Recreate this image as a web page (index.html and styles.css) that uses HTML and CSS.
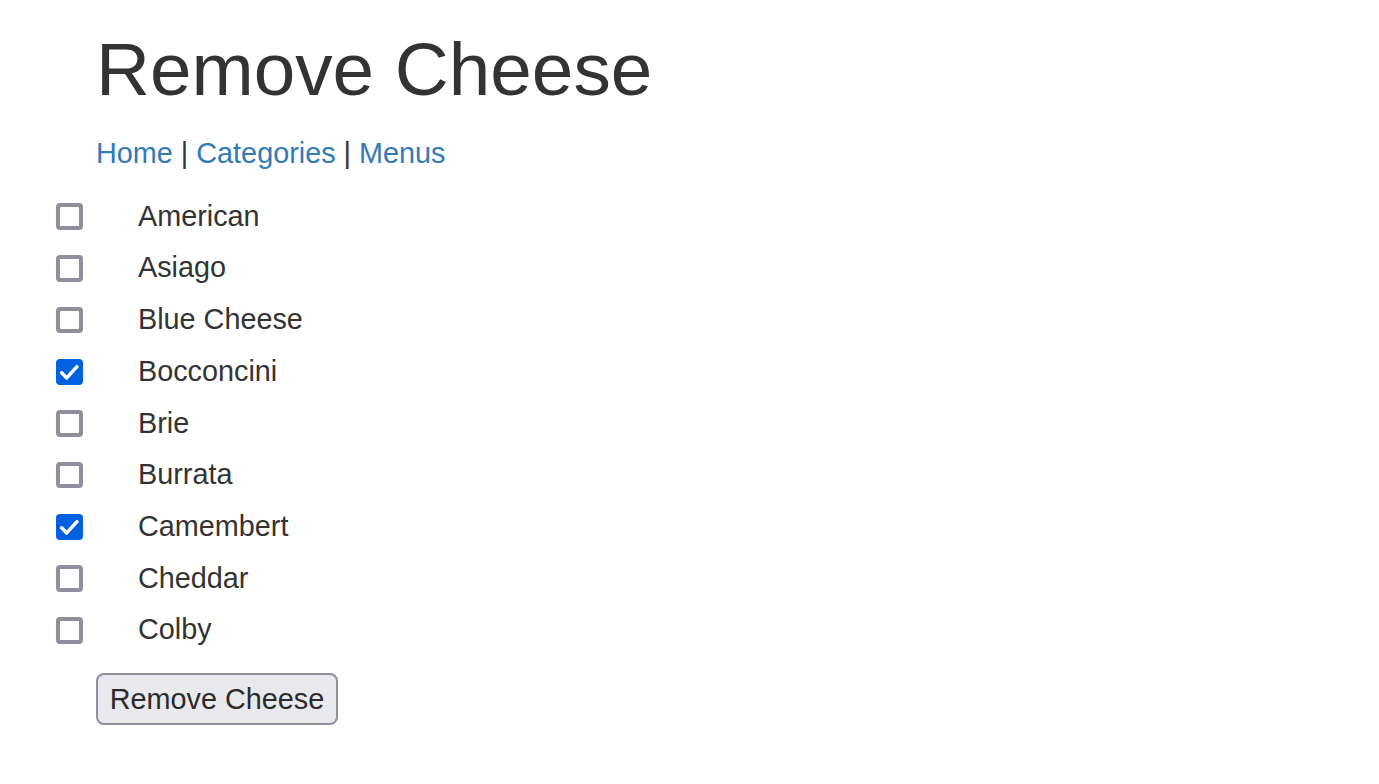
FILE: index.html
```html
<!DOCTYPE html>
<html>
<head>
<meta charset="utf-8">
<title>Remove Cheese</title>
<link rel="stylesheet" href="styles.css">
</head>
<body>
<div class="page">
  <h1 class="title">Remove Cheese</h1>
  <nav class="crumbs"><a href="#">Home</a> | <a href="#">Categories</a> | <a href="#">Menus</a></nav>
  <form class="form">
    <ul class="list">
      <li class="row"><span class="box"></span><span class="label">American</span></li>
      <li class="row"><span class="box"></span><span class="label">Asiago</span></li>
      <li class="row"><span class="box"></span><span class="label">Blue Cheese</span></li>
      <li class="row"><span class="box checked"><svg viewBox="0 0 26 26" width="100%" height="100%"><path d="M5.5 13.5 L10.5 18.5 L20.5 7.5" fill="none" stroke="#fff" stroke-width="3.4" stroke-linecap="round" stroke-linejoin="round"/></svg></span><span class="label">Bocconcini</span></li>
      <li class="row"><span class="box"></span><span class="label">Brie</span></li>
      <li class="row"><span class="box"></span><span class="label">Burrata</span></li>
      <li class="row"><span class="box checked"><svg viewBox="0 0 26 26" width="100%" height="100%"><path d="M5.5 13.5 L10.5 18.5 L20.5 7.5" fill="none" stroke="#fff" stroke-width="3.4" stroke-linecap="round" stroke-linejoin="round"/></svg></span><span class="label">Camembert</span></li>
      <li class="row"><span class="box"></span><span class="label">Cheddar</span></li>
      <li class="row"><span class="box"></span><span class="label">Colby</span></li>
    </ul>
    <button type="button" class="btn">Remove Cheese</button>
  </form>
</div>
</body>
</html>
```
FILE: styles.css
```css
html, body {
  margin: 0;
  padding: 0;
  background: #fff;
}
body {
  font-family: "Liberation Sans", Arial, sans-serif;
  font-size: 28.8px;
  line-height: 41px;
  color: #333;
}
.page {
  padding: 29px 0 0 96px;
}
.title {
  margin: 0 0 22.5px 0;
  font-size: 74.7px;
  font-weight: normal;
  line-height: 81.4px;
  color: #333;
}
.crumbs {
  height: 41px;
}
.crumbs a {
  color: #337ab7;
  text-decoration: none;
}
.form {
  margin: 16.5px 0 0 0;
}
.list {
  list-style: none;
  margin: 0 0 0 -40px;
  padding: 0;
}
.row {
  display: flex;
  align-items: center;
  height: 51.7px;
}
.box {
  box-sizing: border-box;
  width: 26.6px;
  height: 26.6px;
  border: 4px solid #8f8f9d;
  border-radius: 4px;
  background: #fff;
  margin-top: 1px;
  display: flex;
}
.box.checked {
  border: none;
  background: #0060df;
}
.box svg {
  display: block;
}
.label {
  margin-left: 55.4px;
}
.btn {
  display: block;
  margin-top: 17px;
  box-sizing: border-box;
  width: 242px;
  height: 52.8px;
  padding: 1px 0 0 0;
  white-space: nowrap;
  font-family: "Liberation Sans", Arial, sans-serif;
  font-size: 28.8px;
  color: #2b2b2b;
  background: #e9e9ed;
  border: 2px solid #8f8f9d;
  border-radius: 8px;
}
```
